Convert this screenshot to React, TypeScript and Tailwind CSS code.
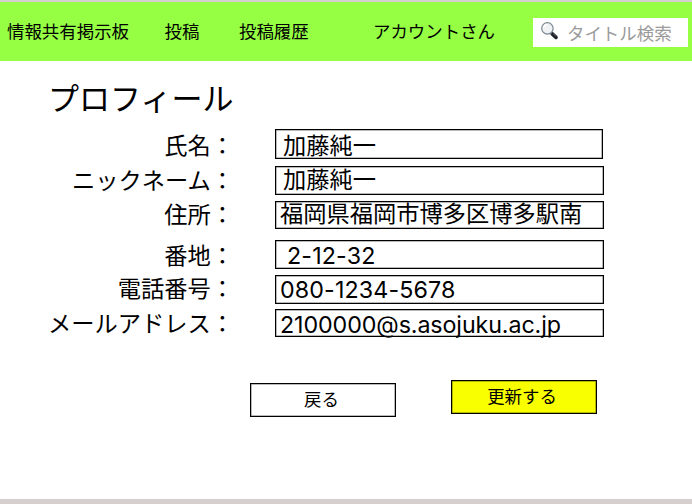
import React from "react";

type Row = {
  label: string;
  value: string;
  row: string;
  labelBox: string;
  field: string;
  text: string;
};

const rows: Row[] = [
  { label: "氏名：", value: "加藤純一", row: "mt-[9px] h-[30px]", labelBox: "w-[234px] pt-[1px]", field: "ml-[41px] w-[328px] h-[30px] pl-[7px]", text: "mt-[2px]" },
  { label: "ニックネーム：", value: "加藤純一", row: "mt-[7px] h-[29px]", labelBox: "w-[234px] -mt-px", field: "ml-[41px] w-[329px] h-[29px] pl-[7px]", text: "-mt-px" },
  { label: "住所：", value: "福岡県福岡市博多区博多駅南", row: "mt-[6px] h-[28px]", labelBox: "w-[234px] -mt-[2px]", field: "ml-[41px] w-[329px] h-[28px] pl-[4px]", text: "-mt-[2px]" },
  { label: "番地：", value: "2-12-32", row: "mt-[11px] h-[29px]", labelBox: "w-[234px]", field: "ml-[41px] w-[329px] h-[29px] pl-[11px]", text: "mt-px tracking-[0.15px]" },
  { label: "電話番号：", value: "080-1234-5678", row: "mt-[6px] h-[29px]", labelBox: "w-[234px] -mt-[2px]", field: "ml-[41px] w-[329px] h-[29px] pl-[4px]", text: "tracking-[0.12px]" },
  { label: "メールアドレス：", value: "2100000@s.asojuku.ac.jp", row: "mt-[5px] h-[28px]", labelBox: "w-[234px] -mt-px", field: "ml-[41px] w-[329px] h-[28px] pl-[4px]", text: "mt-px tracking-[-0.1px]" },
];

function SearchGlyph() {
  return (
    <svg width="19" height="19" viewBox="0 0 19 19" className="shrink-0">
      <path d="M12 11.6 L16 15.4" stroke="#1c2026" strokeWidth="3.6" strokeLinecap="round" />
      <path d="M10.2 10 L12 11.6" stroke="#4f555e" strokeWidth="2" />
      <path d="M13 11.5 L16 14.4" stroke="#6a717b" strokeWidth="0.8" />
      <circle cx="7.4" cy="6.4" r="5.7" fill="#f0f2f4" stroke="#7c8894" strokeWidth="1.2" />
      <path d="M3.6 6 A3.7 3.7 0 0 1 7 2.7" fill="none" stroke="#ffffff" strokeWidth="1.3" />
    </svg>
  );
}

export default function App() {
  return (
    <div className="h-[504px] w-[692px] overflow-hidden border-t-2 border-b-[5px] border-[#d6cfcf] bg-white font-['Noto_Sans_CJK_JP',sans-serif] text-black">
      <header className="flex h-[59px] items-start bg-[#96ff44] text-[17.45px] leading-[26px] whitespace-nowrap">
        <nav className="flex pt-[16px] pl-[7px]">
          <a className="w-[157.5px]">情報共有掲示板</a>
          <a className="w-[74.5px]">投稿</a>
          <a className="w-[134px]">投稿履歴</a>
          <span className="w-[160px]">アカウントさん</span>
        </nav>
        <div className="mt-[15.5px] flex h-[29px] w-[155px] items-start bg-white pt-[4.5px] pl-[7px]">
          <SearchGlyph />
          <span className="-mt-[2px] ml-[8px] text-[#9b9b9b]">タイトル検索</span>
        </div>
      </header>
      <main>
        <h1 className="h-[59px] pt-[14px] pl-[48px] text-[31px] leading-[44px]">プロフィール</h1>
        {rows.map((r) => (
          <div key={r.label} className={`flex items-start text-[23.25px] leading-[28px] whitespace-nowrap ${r.row}`}>
            <div className={`text-right ${r.labelBox}`}>{r.label}</div>
            <div className={`border border-black shadow-[inset_0_0_0_0.5px_rgba(0,0,0,0.55)] font-[Inter,'Noto_Sans_CJK_JP',sans-serif] ${r.field}`}>
              <div className={r.text}>{r.value}</div>
            </div>
          </div>
        ))}
        <div className="flex items-start pt-[43px] pl-[250px] text-[17.45px] leading-[30px]">
          <button className="mt-[3px] h-[34px] w-[146px] border border-black pr-[3px] pb-[2px] shadow-[inset_0_0_0_0.5px_rgba(0,0,0,0.55)]">戻る</button>
          <button className="ml-[55px] h-[34px] w-[146px] border border-black bg-[#faff00] pr-[4px] pb-[2px] shadow-[inset_0_0_0_0.5px_rgba(0,0,0,0.55)]">更新する</button>
        </div>
      </main>
    </div>
  );
}
